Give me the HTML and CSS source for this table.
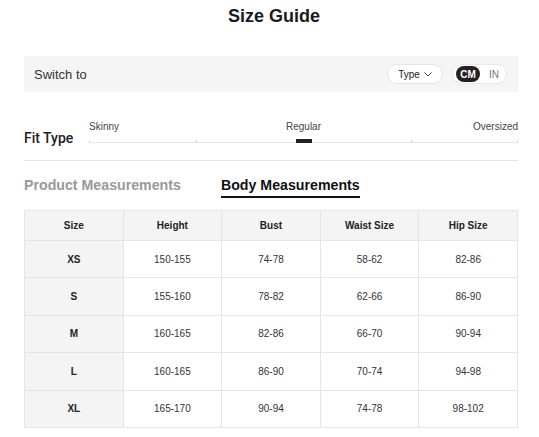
FILE: index.html
```html
<!DOCTYPE html>
<html lang="en">
<head>
<meta charset="utf-8">
<title>Size Guide</title>
<link rel="stylesheet" href="styles.css">
</head>
<body>
<div class="page">
  <h1 class="title">Size Guide</h1>

  <div class="switch-bar">
    <span class="switch-label">Switch to</span>
    <div class="switch-controls">
      <button class="type-pill">Type
        <svg class="chev" width="8" height="5" viewBox="0 0 8 5"><path d="M0.5 0.5 L4 4 L7.5 0.5" fill="none" stroke="#333" stroke-width="0.9"/></svg>
      </button>
      <div class="unit-toggle">
        <span class="unit active">CM</span>
        <span class="unit">IN</span>
      </div>
    </div>
  </div>

  <div class="fit">
    <div class="fit-label">Fit Type</div>
    <div class="slider">
      <div class="slider-labels">
        <span class="lbl-left">Skinny</span>
        <span class="lbl-mid">Regular</span>
        <span class="lbl-right">Oversized</span>
      </div>
      <div class="track">
        <span class="tick t0"></span>
        <span class="tick t1"></span>
        <span class="tick t2"></span>
        <span class="tick t3"></span>
        <span class="tick t4"></span>
        <span class="marker"></span>
      </div>
    </div>
  </div>

  <div class="tabs">
    <span class="tab">Product Measurements</span>
    <span class="tab active">Body Measurements</span>
  </div>

  <table class="size-table">
    <thead>
      <tr><th>Size</th><th>Height</th><th>Bust</th><th>Waist Size</th><th>Hip Size</th></tr>
    </thead>
    <tbody>
      <tr><td class="size">XS</td><td>150-155</td><td>74-78</td><td>58-62</td><td>82-86</td></tr>
      <tr><td class="size">S</td><td>155-160</td><td>78-82</td><td>62-66</td><td>86-90</td></tr>
      <tr><td class="size">M</td><td>160-165</td><td>82-86</td><td>66-70</td><td>90-94</td></tr>
      <tr><td class="size">L</td><td>160-165</td><td>86-90</td><td>70-74</td><td>94-98</td></tr>
      <tr><td class="size">XL</td><td>165-170</td><td>90-94</td><td>74-78</td><td>98-102</td></tr>
    </tbody>
  </table>
</div>
</body>
</html>
```

FILE: styles.css
```css
* { box-sizing: border-box; }

body {
  margin: 0;
  background: #fff;
  font-family: "Liberation Sans", Arial, sans-serif;
  color: #222;
}

.page {
  padding: 0 21px 0 24px;
}

.title {
  margin: 0;
  padding-top: 6px;
  padding-left: 6px;
  font-size: 18px;
  line-height: 20px;
  font-weight: bold;
  text-align: center;
  color: #1a1a1a;
}

.switch-bar {
  margin-top: 30px;
  height: 36px;
  background: #f5f5f5;
  display: flex;
  align-items: center;
  justify-content: space-between;
  padding: 0 11px 0 10px;
}

.switch-label {
  font-size: 13px;
  color: #333;
}

.switch-controls {
  display: flex;
  align-items: center;
  gap: 9px;
}

.type-pill {
  width: 56px;
  height: 20px;
  border: 1px solid #e5e5e5;
  border-radius: 10px;
  background: #fff;
  font-family: inherit;
  font-size: 10px;
  color: #222;
  display: flex;
  align-items: center;
  justify-content: center;
  gap: 4px;
  padding: 0;
}

.chev { display: block; }

.unit-toggle {
  width: 55px;
  height: 20px;
  border: 1px solid #e8e8e8;
  border-radius: 10px;
  background: #fff;
  display: flex;
  align-items: center;
  padding: 0 3px;
  gap: 9px;
}

.unit {
  font-size: 10px;
  color: #777;
}

.unit.active {
  width: 24px;
  height: 16px;
  border-radius: 8px;
  background: #222;
  color: #fff;
  font-weight: bold;
  display: flex;
  align-items: center;
  justify-content: center;
}

.fit {
  margin-top: 29px;
  padding-bottom: 17px;
  border-bottom: 1px solid #e5e5e5;
  display: flex;
  align-items: flex-end;
}

.fit-label {
  width: 65px;
  flex: none;
  font-family: Roboto, "Liberation Sans", sans-serif;
  font-size: 14px;
  line-height: 16px;
  font-weight: 500;
  color: #222;
  margin-bottom: -3px;
}

.slider {
  flex: 1;
}

.slider-labels {
  display: grid;
  grid-template-columns: 1fr auto 1fr;
  font-size: 10px;
  line-height: 12px;
  color: #444;
}

.lbl-left { text-align: left; }
.lbl-mid { text-align: center; }
.lbl-right { text-align: right; }

.track {
  position: relative;
  height: 5px;
  margin-top: 5px;
  border-bottom: 1px solid #e5e5e5;
}

.tick {
  position: absolute;
  bottom: -1px;
  width: 1px;
  height: 3px;
  background: #d8d8d8;
}

.t0 { left: 0; }
.t1 { left: 25%; }
.t2 { left: 50%; }
.t3 { left: 75%; }
.t4 { right: 0; }

.marker {
  position: absolute;
  left: 50%;
  bottom: -1px;
  width: 16px;
  height: 4px;
  margin-left: -8px;
  background: #222;
}

.tabs {
  margin-top: 15px;
  display: flex;
  gap: 40px;
}

.tab {
  font-size: 14.2px;
  line-height: 18px;
  font-weight: bold;
  color: #999;
  padding-bottom: 2px;
  border-bottom: 2px solid transparent;
}

.tab.active {
  color: #111;
  border-bottom-color: #111;
}

.size-table {
  margin-top: 12px;
  width: 100%;
  border-collapse: collapse;
  table-layout: fixed;
  font-size: 10px;
}

.size-table th,
.size-table td {
  border: 1px solid #e5e5e5;
  text-align: center;
  padding: 0;
}

.size-table th {
  height: 30px;
  background: #f4f4f4;
  font-weight: bold;
  color: #222;
}

.size-table td {
  height: 37.4px;
  color: #333;
}

.size-table tbody tr {
  height: 37.4px;
}

.size-table td.size {
  background: #f4f4f4;
  font-weight: bold;
  color: #222;
}
```
